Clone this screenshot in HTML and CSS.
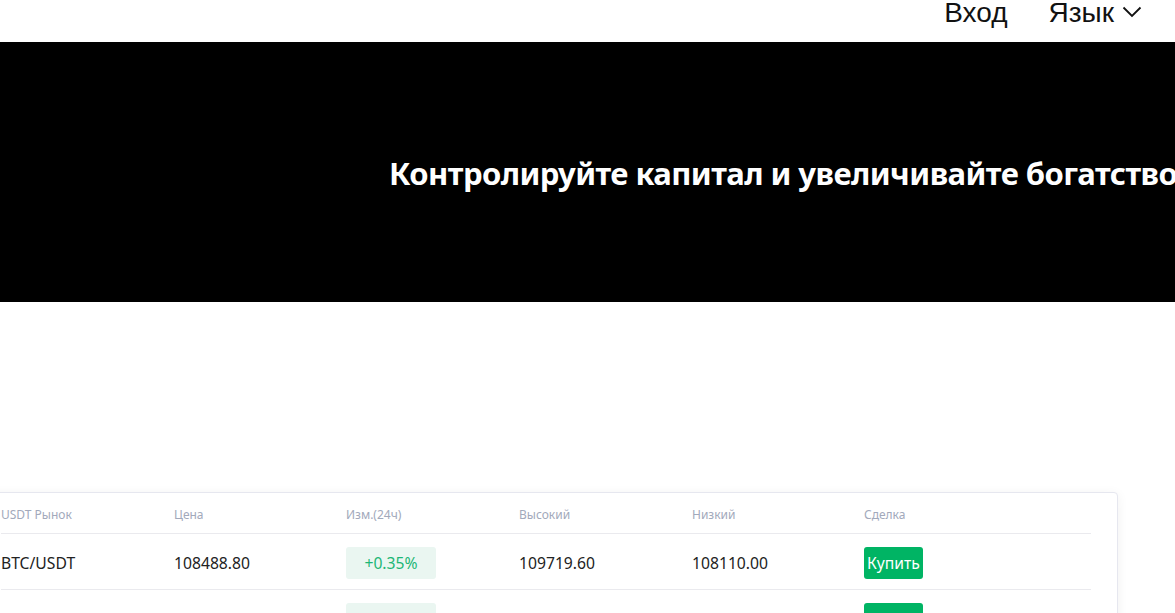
FILE: index.html
```html
<!DOCTYPE html>
<html lang="ru">
<head>
<meta charset="utf-8">
<title>Market</title>
<link rel="stylesheet" href="styles.css">
</head>
<body>
<header class="topbar">
  <a class="nav-link">Вход</a>
  <a class="nav-link lang">Язык
    <svg class="chev" width="20" height="12" viewBox="0 0 20 12"><path d="M1.5 1.5 L10 10 L18.5 1.5" fill="none" stroke="#111" stroke-width="1.8"/></svg>
  </a>
</header>
<section class="hero">
  <h1 class="hero-title">Контролируйте капитал и увеличивайте богатство</h1>
</section>
<section class="market">
  <div class="card">
    <div class="row head">
      <div>USDT Рынок</div><div>Цена</div><div>Изм.(24ч)</div><div>Высокий</div><div>Низкий</div><div>Сделка</div><div></div>
    </div>
    <div class="row">
      <div>BTC/USDT</div><div>108488.80</div><div><span class="chg">+0.35%</span></div><div>109719.60</div><div>108110.00</div><div><span class="buy">Купить</span></div><div></div>
    </div>
    <div class="row">
      <div>ETH/USDT</div><div>2548.31</div><div><span class="chg">+1.12%</span></div><div>2571.40</div><div>2498.70</div><div><span class="buy">Купить</span></div><div></div>
    </div>
  </div>
</section>
</body>
</html>
```
FILE: styles.css
```css
* { box-sizing: border-box; }
html, body { margin: 0; padding: 0; }
body { background: #fff; overflow: hidden; width: 1175px; height: 613px; font-family: "Noto Sans", sans-serif; }
.topbar {
  height: 42px;
  display: flex;
  justify-content: flex-end;
  align-items: flex-start;
  gap: 41px;
  padding: 0 33px 0 0;
  font-family: "Liberation Sans", Arial, sans-serif;
  font-size: 28px;
  line-height: 26px;
  color: #111;
}
.nav-link { display: flex; align-items: center; }
.lang .chev { margin-left: 8px; margin-top: -3px; }
.hero {
  background: #000;
  height: 260px;
  display: flex;
  align-items: center;
  padding-left: 389px;
  padding-top: 2px;
  overflow: hidden;
}
.hero-title {
  margin: 0;
  color: #fff;
  font-family: "Noto Sans", sans-serif;
  font-weight: 700;
  font-size: 31px;
  white-space: nowrap;
  letter-spacing: -0.55px;
}
.market { padding-top: 190px; }
.card {
  margin-left: -26px;
  width: 1144px;
  border: 1px solid #e6e7ef;
  border-radius: 4px;
  box-shadow: 0 2px 12px rgba(0,0,0,0.06);
  padding: 0 26px;
  background: #fff;
}
.row {
  display: grid;
  grid-template-columns: 173px 172px 173px 173px 172px 1fr 1fr;
  align-items: center;
  height: 56px;
  padding-top: 2px;
  border-bottom: 1px solid #eaeaee;
  font-size: 15.7px;
  color: #222;
}
.row > div { padding-left: 0; }
.row.head {
  height: 41px;
  font-size: 12px;
  color: #a2a9bb;
  padding-top: 2px;
}
.chg {
  display: inline-block;
  width: 90px;
  height: 32px;
  line-height: 32px;
  text-align: center;
  background: #eaf6f1;
  color: #1db676;
  border-radius: 3px;
}
.buy {
  display: inline-block;
  height: 32px;
  line-height: 32px;
  padding: 0 3px;
  background: #00b464;
  color: #fff;
  border-radius: 3px;
}
```
